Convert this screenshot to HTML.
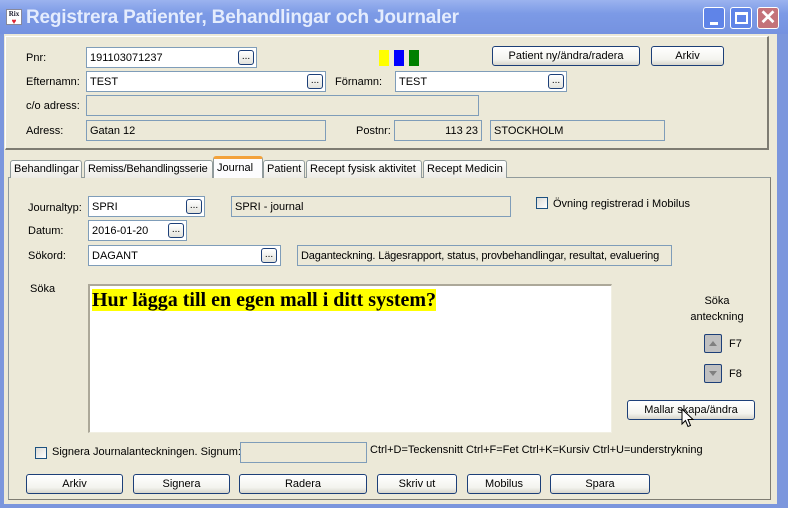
<!DOCTYPE html>
<html><head><meta charset="utf-8"><style>
*{box-sizing:border-box;margin:0;padding:0}
body{width:788px;height:508px;background:#7b96dd;position:relative;overflow:hidden;font-family:"Liberation Sans",sans-serif;font-size:11px;color:#000}
.a{position:absolute}
.title{left:0;top:0;width:788px;height:34px;background:linear-gradient(#9bb3ef,#7c9ae6 40%,#7592e0);}
.client{left:4px;top:34px;width:773px;height:470px;background:#ece9d8}
.in{position:absolute;background:#fff;border:1px solid #7f9db9;padding:1px 0 0 3px;line-height:18px;font-size:11px;white-space:nowrap;overflow:hidden}
.gr{background:#ece9d8}
.db{position:absolute;width:16px;height:15px;border:1px solid #1c3f78;border-radius:3px;background:linear-gradient(#fff,#e3e3dc);font-size:10px;text-align:center;line-height:11px}
.btn{position:absolute;height:20px;border:1px solid #1c3f78;border-radius:3px;background:linear-gradient(#fff,#f3f3ee 70%,#d8d6cc);text-align:center;line-height:18px;font-size:11px}
.lb{position:absolute;font-size:11px;white-space:nowrap}
.tab{position:absolute;top:160px;height:18px;border:1px solid #919b9c;border-bottom:none;border-radius:3px 3px 0 0;background:linear-gradient(#fff,#ecebe5);padding:2px 3px 0;font-size:11px;white-space:nowrap}
.cb{position:absolute;width:12px;height:12px;border:1px solid #1c5180;background:linear-gradient(135deg,#dcdbd5,#fff)}
</style></head><body>
<div class="a title"></div>
<div class="a" style="left:6px;top:9px;width:16px;height:16px;background:#fff;border:1px solid #889;font:bold 7px 'Liberation Serif',serif;color:#223;text-align:center;line-height:8px">Rix<br><span style="color:#e02030;font-size:8px">♥</span></div>
<div class="a" style="left:26px;top:7px;font-size:19px;font-weight:bold;color:#e4ecfd;white-space:nowrap;letter-spacing:-0.2px">Registrera Patienter, Behandlingar och Journaler</div>
<div class="a" style="left:703px;top:7px;width:22px;height:22px;border:1px solid #fff;border-radius:3px;background:#5f84e8"><div class="a" style="left:6px;top:14px;width:8px;height:3px;background:#fff"></div></div>
<div class="a" style="left:730px;top:7px;width:22px;height:22px;border:1px solid #fff;border-radius:3px;background:#5f84e8"><div class="a" style="left:4px;top:4px;width:13px;height:12px;border:2px solid #fff;border-top-width:3px"></div></div>
<div class="a" style="left:757px;top:7px;width:22px;height:22px;border:1px solid #fff;border-radius:3px;background:#c4727a;color:#fff;font-size:20px;font-weight:bold;text-align:center;line-height:21px">✕</div>
<div class="a client"></div>
<div class="a" style="left:5px;top:36px;width:764px;height:114px;border-top:1px solid #fff;border-left:1px solid #fff;border-right:2px solid #7e7c72;border-bottom:2px solid #7e7c72"></div>
<div class="lb" style="left:26px;top:52px">Pnr:</div>
<div class="in" style="left:86px;top:47px;width:171px;height:21px">191103071237</div><div class="db" style="left:238px;top:50px">...</div>
<div class="a" style="left:379px;top:50px;width:10px;height:16px;background:#ff0"></div>
<div class="a" style="left:394px;top:50px;width:10px;height:16px;background:#00f"></div>
<div class="a" style="left:409px;top:50px;width:10px;height:16px;background:#008000"></div>
<div class="btn" style="left:492px;top:46px;width:148px">Patient ny/ändra/radera</div>
<div class="btn" style="left:651px;top:46px;width:73px">Arkiv</div>
<div class="lb" style="left:26px;top:76px">Efternamn:</div>
<div class="in" style="left:86px;top:71px;width:240px;height:21px">TEST</div><div class="db" style="left:307px;top:74px">...</div>
<div class="lb" style="left:335px;top:76px">Förnamn:</div>
<div class="in" style="left:395px;top:71px;width:172px;height:21px">TEST</div><div class="db" style="left:548px;top:74px">...</div>
<div class="lb" style="left:26px;top:100px">c/o adress:</div>
<div class="in gr" style="left:86px;top:95px;width:393px;height:21px"></div>
<div class="lb" style="left:26px;top:125px">Adress:</div>
<div class="in gr" style="left:86px;top:120px;width:240px;height:21px">Gatan 12</div>
<div class="lb" style="left:356px;top:125px">Postnr:</div>
<div class="in gr" style="left:394px;top:120px;width:88px;height:21px;text-align:right;padding-right:3px">113 23</div>
<div class="in gr" style="left:490px;top:120px;width:175px;height:21px">STOCKHOLM</div>
<div class="a" style="left:8px;top:177px;width:763px;height:323px;border:1px solid #919b9c;background:#ece9d8;border-right-color:#7e7c72;border-bottom-color:#7e7c72"></div>
<div class="tab" style="left:10px;width:72px">Behandlingar</div>
<div class="tab" style="left:84px;width:129px;letter-spacing:-0.2px">Remiss/Behandlingsserie</div>
<div class="tab" style="left:213px;top:156px;height:22px;width:50px;background:#fcfcfe;border-top:3px solid #f3a23a;padding-top:3px">Journal</div>
<div class="tab" style="left:263px;width:42px">Patient</div>
<div class="tab" style="left:306px;width:116px">Recept fysisk aktivitet</div>
<div class="tab" style="left:423px;width:84px">Recept Medicin</div>
<div class="lb" style="left:28px;top:202px">Journaltyp:</div>
<div class="in" style="left:88px;top:196px;width:117px;height:21px">SPRI</div><div class="db" style="left:186px;top:199px">...</div>
<div class="in gr" style="left:231px;top:196px;width:280px;height:21px">SPRI - journal</div>
<div class="cb" style="left:536px;top:197px"></div><div class="lb" style="left:553px;top:198px">Övning registrerad i Mobilus</div>
<div class="lb" style="left:28px;top:225px">Datum:</div>
<div class="in" style="left:88px;top:220px;width:99px;height:21px">2016-01-20</div><div class="db" style="left:168px;top:223px">...</div>
<div class="lb" style="left:28px;top:250px">Sökord:</div>
<div class="in" style="left:88px;top:245px;width:193px;height:21px">DAGANT</div><div class="db" style="left:261px;top:248px">...</div>
<div class="in gr" style="left:297px;top:245px;width:375px;height:21px;letter-spacing:-0.15px">Daganteckning. Lägesrapport, status, provbehandlingar, resultat, evaluering</div>
<div class="lb" style="left:30px;top:283px">Söka</div>
<div class="a" style="left:88px;top:284px;width:524px;height:149px;background:#fff;border-top:2px solid #aca899;border-left:2px solid #aca899;border-right:1px solid #f1efe2;border-bottom:1px solid #f1efe2"></div>
<div class="a" style="left:92px;top:289px;font:bold 20px 'Liberation Serif',serif;background:#ff0;white-space:nowrap;line-height:22px">Hur lägga till en egen mall i ditt system?</div>
<div class="lb" style="left:680px;top:293px;width:74px;text-align:center;line-height:16px">Söka<br>anteckning</div>
<div class="a" style="left:704px;top:334px;width:18px;height:19px;border:1px solid #1c3f78;border-radius:2px;background:#c0c0c0"><div class="a" style="left:4px;top:6px;border-left:4px solid transparent;border-right:4px solid transparent;border-bottom:5px solid #808080"></div></div>
<div class="lb" style="left:729px;top:338px">F7</div>
<div class="a" style="left:704px;top:364px;width:18px;height:19px;border:1px solid #1c3f78;border-radius:2px;background:#c0c0c0"><div class="a" style="left:4px;top:6px;border-left:4px solid transparent;border-right:4px solid transparent;border-top:5px solid #808080"></div></div>
<div class="lb" style="left:729px;top:368px">F8</div>
<div class="btn" style="left:627px;top:400px;width:128px">Mallar skapa/ändra</div>
<svg class="a" style="left:681px;top:408px" width="14" height="22" viewBox="0 0 14 22"><path d="M1 1 L1 16 L4.5 12.5 L7 18.5 L9.5 17.5 L7 11.5 L12 11.5 Z" fill="#fff" stroke="#000" stroke-width="1"/></svg>
<div class="cb" style="left:35px;top:447px"></div>
<div class="lb" style="left:52px;top:446px">Signera Journalanteckningen. Signum:</div>
<div class="in gr" style="left:240px;top:442px;width:127px;height:21px"></div>
<div class="lb" style="left:370px;top:444px">Ctrl+D=Teckensnitt Ctrl+F=Fet Ctrl+K=Kursiv Ctrl+U=understrykning</div>
<div class="btn" style="left:26px;top:474px;width:97px">Arkiv</div>
<div class="btn" style="left:133px;top:474px;width:97px">Signera</div>
<div class="btn" style="left:239px;top:474px;width:128px">Radera</div>
<div class="btn" style="left:377px;top:474px;width:80px">Skriv ut</div>
<div class="btn" style="left:467px;top:474px;width:74px">Mobilus</div>
<div class="btn" style="left:550px;top:474px;width:100px">Spara</div>
</body></html>
